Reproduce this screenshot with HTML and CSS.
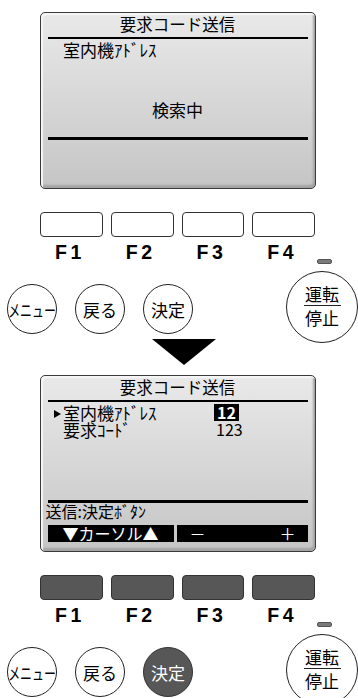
FILE: index.html
```html
<!DOCTYPE html>
<html lang="ja">
<head>
<meta charset="utf-8">
<title>要求コード送信</title>
<link rel="stylesheet" href="styles.css">
</head>
<body>
<div class="page">
  <section class="panel">
    <div class="screen">
      <div class="scr-title">要求コード送信</div>
      <div class="scr-rule"></div>
      <div class="scr-row"><span class="mark"></span><span>室内機ｱﾄﾞﾚｽ</span><span></span></div>
      <div class="scr-center">検索中</div>
      <div class="scr-rule scr-rule--low"></div>
    </div>
    <div class="fkeys">
      <div class="fkey"></div>
      <div class="fkey"></div>
      <div class="fkey"></div>
      <div class="fkey"></div>
    </div>
    <div class="flabels">
      <span>F1</span><span>F2</span><span>F3</span><span>F4</span>
    </div>
    <div class="controls">
      <div class="rbuttons">
        <div class="rbtn"><span class="squeeze">メニュー</span></div>
        <div class="rbtn">戻る</div>
        <div class="rbtn">決定</div>
      </div>
      <div class="power">
        <div class="led"></div>
        <div class="power-btn"><span>運転</span><span class="power-bar"></span><span>停止</span></div>
      </div>
    </div>
  </section>

  <div class="arrow"></div>

  <section class="panel panel--active">
    <div class="screen">
      <div class="scr-title">要求コード送信</div>
      <div class="scr-rule"></div>
      <div class="scr-row"><span class="mark mark--on"></span><span>室内機ｱﾄﾞﾚｽ</span><span class="val val--sel">12</span></div>
      <div class="scr-row scr-row--next"><span class="mark"></span><span>要求ｺｰﾄﾞ</span><span class="val">123</span></div>
      <div class="scr-rule scr-rule--low2"></div>
      <div class="scr-hint">送信:決定ﾎﾞﾀﾝ</div>
      <div class="scr-bar">
        <div class="seg seg--center">▼カーソル▲</div>
        <div class="seg seg--split"><span>－</span><span>＋</span></div>
      </div>
    </div>
    <div class="fkeys">
      <div class="fkey"></div>
      <div class="fkey"></div>
      <div class="fkey"></div>
      <div class="fkey"></div>
    </div>
    <div class="flabels">
      <span>F1</span><span>F2</span><span>F3</span><span>F4</span>
    </div>
    <div class="controls">
      <div class="rbuttons">
        <div class="rbtn"><span class="squeeze">メニュー</span></div>
        <div class="rbtn">戻る</div>
        <div class="rbtn rbtn--on">決定</div>
      </div>
      <div class="power">
        <div class="led"></div>
        <div class="power-btn"><span>運転</span><span class="power-bar"></span><span>停止</span></div>
      </div>
    </div>
  </section>
</div>
</body>
</html>
```
FILE: styles.css
```css
html, body {
  margin: 0;
  padding: 0;
  background: #fff;
}
body {
  font-family: "Noto Sans CJK JP", "Noto Sans", sans-serif;
  color: #000;
}
.page {
  width: 358px;
  height: 698px;
  overflow: hidden;
}

/* LCD screen */
.screen {
  margin: 12px 0 0 40px;
  width: 276px;
  height: 177px;
  box-sizing: border-box;
  border: 1.5px solid #3a3a3a;
  border-radius: 5px;
  background: linear-gradient(#e9e9e9, #c5c5c5);
  box-shadow: inset 2px 2px 1px #f6f6f6, inset -2px -3px 2px #a4a4a4;
  padding: 0 7.5px 0 6.5px;
  display: flex;
  flex-direction: column;
  font-size: 16px;
  line-height: 17px;
}
.scr-title {
  padding-top: 3px;
  text-align: center;
  font-size: 16.5px;
}
.scr-rule {
  margin-top: 3.5px;
  height: 2.5px;
  background: #000;
}
.scr-rule--low {
  margin-top: 19.5px;
}
.scr-rule--low2 {
  margin-top: 62px;
}
.scr-row {
  margin-top: 2px;
  display: grid;
  grid-template-columns: 9px 151px auto;
  align-items: center;
  padding-left: 6.5px;
  font-size: 17px;
}
.scr-row--next {
  margin-top: 0;
}
.mark {
  width: 0;
  height: 0;
}
.mark--on {
  margin-top: 3px;
  border-left: 7px solid #000;
  border-top: 4px solid transparent;
  border-bottom: 4px solid transparent;
}
.val {
  justify-self: start;
  padding: 0 2px;
  font-size: 16px;
}
.val--sel {
  background: #000;
  color: #fff;
  font-weight: 700;
  padding: 0 3px;
}
.scr-center {
  margin-top: 42.5px;
  text-align: center;
  font-size: 17px;
}
.scr-hint {
  margin-left: -2px;
}
.scr-bar {
  margin-top: 5px;
  display: grid;
  grid-template-columns: 126px 1fr;
  gap: 3px;
  height: 17px;
}
.seg {
  background: #000;
  color: #fff;
  line-height: 17px;
}
.seg--center {
  text-align: center;
}
.seg--split {
  display: flex;
  justify-content: space-between;
  padding: 0 12px 0 13px;
}

/* function keys */
.fkeys {
  margin: 23px 0 0 40px;
  width: 275px;
  display: grid;
  grid-template-columns: repeat(4, 1fr);
  gap: 8px;
}
.fkey {
  height: 25px;
  box-sizing: border-box;
  border: 1.5px solid #333;
  border-radius: 4px;
  background: #fff;
}
.panel--active .fkey {
  background: #575757;
}
.flabels {
  margin: 8px 0 0 40px;
  width: 275px;
  display: grid;
  grid-template-columns: repeat(4, 1fr);
  gap: 8px;
  font-family: "Liberation Sans", Arial, sans-serif;
  font-weight: 700;
  font-size: 19.5px;
  line-height: 14px;
  letter-spacing: 3.5px;
  text-align: center;
}
.flabels span {
  padding-right: 3px;
}

/* round buttons */
.controls {
  display: flex;
  justify-content: space-between;
  height: 84px;
}
.rbuttons {
  display: flex;
  gap: 18px;
  padding-left: 7px;
  margin-top: 25px;
  align-items: flex-start;
}
.rbtn {
  width: 50px;
  height: 50px;
  box-sizing: border-box;
  border: 1.5px solid #222;
  border-radius: 50%;
  display: flex;
  align-items: center;
  justify-content: center;
  font-size: 17px;
  line-height: 1;
  background: #fff;
}
.rbtn--on {
  background: #575757;
  color: #fff;
  border-color: #333;
}
.squeeze {
  display: inline-block;
  white-space: nowrap;
  transform: scaleX(0.7);
}
.power {
  width: 72px;
  display: flex;
  flex-direction: column;
  align-items: center;
}
.led {
  width: 15px;
  height: 5px;
  box-sizing: border-box;
  margin-left: 5px;
  background: #7a7a7a;
  border: 1px solid #555;
  border-radius: 2px;
}
.power-btn {
  margin-top: 7px;
  width: 72px;
  height: 72px;
  box-sizing: border-box;
  border: 1.5px solid #222;
  border-radius: 50%;
  display: flex;
  flex-direction: column;
  align-items: center;
  justify-content: center;
  font-size: 17px;
  line-height: 16px;
  padding-bottom: 2px;
}
.power-bar {
  width: 37px;
  height: 1.5px;
  background: #222;
  margin: 3px 0 4px;
}

/* transition arrow */
.arrow {
  margin: -4px 0 -2px 152px;
  width: 0;
  height: 0;
  border-left: 32.5px solid transparent;
  border-right: 32.5px solid transparent;
  border-top: 26px solid #000;
}
```
